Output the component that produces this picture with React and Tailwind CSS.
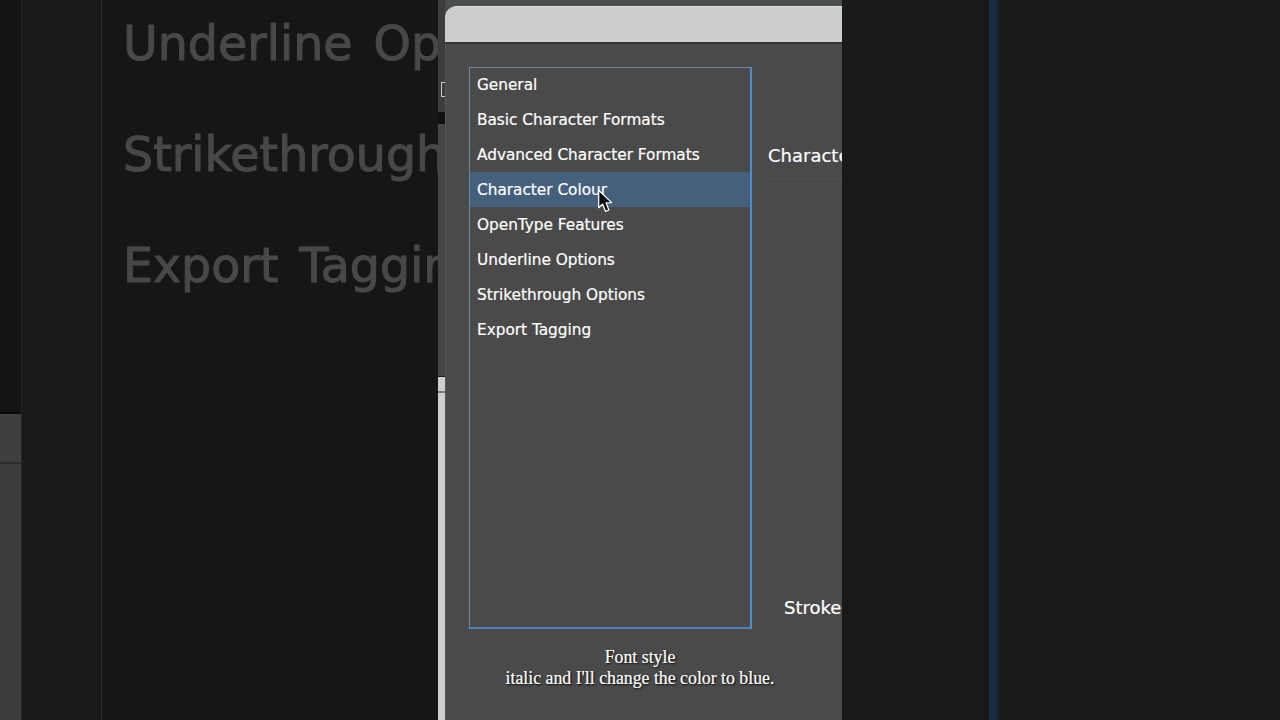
export default function App() {
  const items = ["General","Basic Character Formats","Advanced Character Formats","Character Colour","OpenType Features","Underline Options","Strikethrough Options","Export Tagging"];
  return (
    <div className="flex h-[720px] w-[1280px] overflow-hidden bg-[#181818] font-['DejaVu_Sans',sans-serif]">
      {/* left dimmed window */}
      <div className="flex h-full w-[438px] shrink-0 bg-[#161616]">
        <div className="flex w-[22px] shrink-0 flex-col border-r border-[#262626]">
          <div className="h-[412px] bg-[#141414]" />
          <div className="h-[2px] bg-[#0a0a0a]" />
          <div className="h-[48px] bg-[#3f3f3f]" />
          <div className="h-[2px] bg-[#2c2c2c]" />
          <div className="flex-1 bg-[#3c3c3c]" />
        </div>
        <div className="w-[79px] shrink-0 bg-[#191919]" />
        <div className="flex min-w-0 flex-1 flex-col gap-[52px] overflow-hidden whitespace-nowrap border-l border-[#2a2d2d] pl-[21px] pt-[14px] text-[47.5px] leading-[59px] text-[#484848] blur-[0.5px] [word-spacing:6px] [-webkit-text-stroke:1.1px_#484848]">
          <div>Underline Options</div>
          <div>Strikethrough Options</div>
          <div>Export Tagging</div>
        </div>
      </div>

      {/* center */}
      <div className="relative flex h-full w-[404px] shrink-0 bg-[#4a4d4e]">
        <div className="flex w-[7px] shrink-0 flex-col">
          <div className="flex h-[112px] flex-col justify-start bg-[#3d3d3d] pt-[82px]">
            <div className="ml-[3px] h-[15px] w-[4px] border border-r-0 border-[#c9c9c9]" />
          </div>
          <div className="h-[12px] bg-[#111111]" />
          <div className="h-[252px] bg-[#474747]" />
          <div className="h-[1px] bg-[#151515]" />
          <div className="h-[14px] bg-[#cfcfcf]" />
          <div className="h-[2px] bg-[#7c7c7c]" />
          <div className="flex-1 bg-[#cfcfcf]" />
        </div>
        <div className="flex min-w-0 flex-1 flex-col pt-[6px]">
          <div className="h-[36px] shrink-0 rounded-tl-[12px] border-t border-[#e2e2e2] bg-[#cdcdcd]" />
          <div className="h-[2px] shrink-0 bg-[#363636]" />
          <div className="flex flex-1 items-start overflow-hidden whitespace-nowrap border-l border-[#565656] bg-[#4a4a4a] pl-[23px] pt-[23px] text-white">
            <div className="relative h-[562px] w-[283px] shrink-0 border-b-2 border-l border-r-2 border-t border-b-[#4f83b8] border-l-[#6a87a3] border-r-[#4f8ad0] border-t-[#6d89a6]">
              <div className="-mt-px">
                {items.map((t, i) => (
                  <div key={t} className={`flex h-[35px] items-center pl-[7px] pt-[2px] text-[15.3px] leading-none [-webkit-text-stroke:0.2px_#ffffff] ${i === 3 ? "bg-[#45607c]" : ""}`}>{t}</div>
                ))}
              </div>
              <svg className="absolute left-[127px] top-[121px]" width="18" height="25" viewBox="0 0 16 22">
                <path d="M1.5 1 L1.5 16.5 L5 13.2 L7.6 19.8 L10.6 18.6 L8 12.2 L13 12 Z" fill="#0b0b0b" stroke="#ffffff" strokeWidth="1.1" strokeLinejoin="round" />
              </svg>
            </div>
            <div className="flex w-[90px] flex-col pl-[16px] text-[18px] leading-none [-webkit-text-stroke:0.2px_#ffffff]">
              <div className="mt-[80px] h-[32px] border-b border-[#525252]">Character</div>
              <div className="ml-[16px] mt-[420px]">Stroke</div>
            </div>
          </div>
        </div>
        {/* caption */}
        <div className="absolute inset-x-0 top-[647px] text-center font-['Liberation_Serif',serif] text-[17.8px] leading-[21px] text-white [-webkit-text-stroke:0.2px_#ffffff] [text-shadow:1px_1px_2px_#000]">
          <div>Font style</div>
          <div>italic and I'll change the color to blue.</div>
        </div>
      </div>

      {/* right */}
      <div className="flex h-full flex-1 bg-[#191919]">
        <div className="w-[147px] shrink-0" />
        <div className="h-full w-[12px] shrink-0 bg-gradient-to-r from-[#1b2d40] via-[#1a2c40] to-[#141c24]" />
      </div>
    </div>
  );
}
